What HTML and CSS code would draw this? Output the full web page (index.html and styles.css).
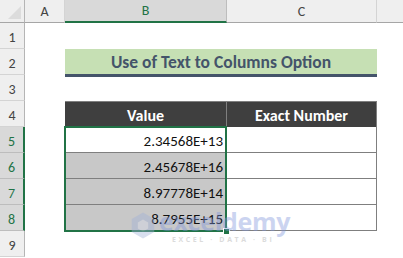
FILE: index.html
```html
<!DOCTYPE html>
<html lang="en">
<head>
    <meta charset="UTF-8" />
    <title>Use of Text to Columns Option</title>
    <link rel="stylesheet" href="styles.css">
</head>
<body>
<div class="sheet">
    <!-- column headers -->
    <div class="corner"><span class="corner-tri"></span></div>
    <div class="col-head">A</div>
    <div class="col-head active">B</div>
    <div class="col-head">C</div>
    <div class="col-head last"></div>

    <!-- row 1 -->
    <div class="row-head">1</div>
    <div class="cell"></div><div class="cell"></div><div class="cell"></div><div class="cell"></div>

    <!-- row 2 -->
    <div class="row-head">2</div>
    <div class="cell"></div>
    <div class="cell title">Use of Text to Columns Option</div>
    <div class="cell"></div>

    <!-- row 3 -->
    <div class="row-head">3</div>
    <div class="cell"></div><div class="cell"></div><div class="cell"></div><div class="cell"></div>

    <!-- row 4 -->
    <div class="row-head">4</div>
    <div class="cell"></div>
    <div class="cell th">Value</div>
    <div class="cell th">Exact Number</div>
    <div class="cell"></div>

    <!-- rows 5-8 -->
    <div class="row-head sel">5</div>
    <div class="cell"></div>
    <div class="cell td first">2.34568E+13</div>
    <div class="cell td"></div>
    <div class="cell"></div>

    <div class="row-head sel">6</div>
    <div class="cell"></div>
    <div class="cell td shaded">2.45678E+16</div>
    <div class="cell td"></div>
    <div class="cell"></div>

    <div class="row-head sel">7</div>
    <div class="cell"></div>
    <div class="cell td shaded">8.97778E+14</div>
    <div class="cell td"></div>
    <div class="cell"></div>

    <div class="row-head sel">8</div>
    <div class="cell"></div>
    <div class="cell td shaded">8.7955E+15</div>
    <div class="cell td"></div>
    <div class="cell"></div>

    <div class="row-head">9</div>
    <div class="cell"></div><div class="cell"></div><div class="cell"></div><div class="cell"></div>

    <!-- selection outline over B5:B8 -->
    <div class="selection"><span class="fill-handle"></span></div>

    <!-- watermark -->
    <div class="watermark">
        <svg class="wm-logo" width="26" height="29" viewBox="0 0 30 32">
            <polygon points="15,1 28,8.5 28,23.5 15,31 2,23.5 2,8.5" fill="#9fb0d8"/>
            <polygon points="15,9 21,12.5 21,19.5 15,23 9,19.5 9,12.5" fill="#d7deef"/>
        </svg>
        <div class="wm-text">
            <div class="wm-name">exceldemy</div>
            <div class="wm-tag">EXCEL · DATA · BI</div>
        </div>
    </div>
</div>
</body>
</html>
```

FILE: styles.css
```css
:root {
    --green: #217346;
    --head-bg: #efefef;
    --head-line: #d4d4d4;
    --grid: #7f7f7f;
}

* {
    box-sizing: border-box;
    margin: 0;
    padding: 0;
}

body {
    background: white;
    font-family: Carlito, Lato, 'Liberation Sans', sans-serif;
    overflow: hidden;
}

.sheet {
    position: relative;
    display: grid;
    grid-template-columns: 25px 40px 162px 150px 1fr;
    grid-template-rows: 23px repeat(9, 26px);
    width: 403px;
    height: 258px;
}

.corner {
    position: relative;
    background: var(--head-bg);
    border-right: 1px solid #b5b5b5;
    border-bottom: 1px solid #a6a6a6;
}

.corner-tri {
    position: absolute;
    right: 3px;
    bottom: 3px;
    width: 0;
    height: 0;
    border-left: 13px solid transparent;
    border-bottom: 13px solid #dcdcdc;
}

.col-head {
    background: var(--head-bg);
    border-right: 1px solid var(--head-line);
    border-bottom: 1px solid #a6a6a6;
    display: flex;
    align-items: center;
    justify-content: center;
    font-size: 14px;
    color: #444;
}

.col-head.active {
    background: #d9d9d9;
    color: var(--green);
    border-bottom: 2px solid var(--green);
    border-right-color: #bdbdbd;
}

.col-head.last {
    border-right: none;
}

.row-head {
    background: var(--head-bg);
    border-right: 1px solid #b5b5b5;
    border-bottom: 1px solid var(--head-line);
    display: flex;
    align-items: flex-end;
    justify-content: center;
    padding-bottom: 2px;
    font-size: 14px;
    color: #444;
}

.row-head.sel {
    background: #d9d9d9;
    color: var(--green);
    border-right: 2px solid var(--green);
    border-bottom-color: #bdbdbd;
}

.cell {
    display: flex;
    align-items: center;
    font-size: 15px;
    color: #111;
}

.title {
    grid-column: span 2;
    justify-content: center;
    background: #c6e0b4;
    border-bottom: 3px solid #44546a;
    color: #44546a;
    font-weight: 700;
    font-size: 17.5px;
    height: 28px;
    padding-top: 1px;
}

.th {
    justify-content: center;
    background: #3f3f3f;
    color: white;
    font-weight: 700;
    font-size: 16px;
    border-top: 1px solid var(--grid);
    border-right: 1px solid var(--grid);
    padding-top: 2px;
}

.th:first-of-type {
    border-left: 1px solid var(--grid);
}

.td {
    justify-content: flex-end;
    padding-right: 3px;
    border-right: 1px solid var(--grid);
    border-bottom: 1px solid var(--grid);
    padding-top: 2px;
}

.td.first {
    border-left: 1px solid var(--grid);
}

.td.shaded {
    background: #c8c8c8;
    border-left: 1px solid var(--grid);
}

.selection {
    position: absolute;
    left: 64px;
    top: 126px;
    width: 163px;
    height: 106px;
    border: 2px solid var(--green);
    pointer-events: none;
}

.fill-handle {
    position: absolute;
    right: -5px;
    bottom: -5px;
    width: 7px;
    height: 7px;
    background: var(--green);
    border: 1px solid white;
}

.watermark {
    position: absolute;
    left: 130px;
    top: 210px;
    display: flex;
    align-items: flex-start;
    gap: 3px;
    opacity: 0.4;
    pointer-events: none;
}

.wm-logo {
    margin-top: 1px;
}

.wm-text {
    display: flex;
    flex-direction: column;
}

.wm-name {
    font-family: 'Open Sans', sans-serif;
    font-weight: 700;
    font-size: 25px;
    line-height: 23px;
    color: #7f96dc;
    letter-spacing: -0.3px;
}

.wm-tag {
    font-family: 'Open Sans', sans-serif;
    font-weight: 700;
    font-size: 7px;
    letter-spacing: 2.6px;
    color: #a8a8a8;
    margin-top: 2px;
    margin-left: 13px;
}
```
